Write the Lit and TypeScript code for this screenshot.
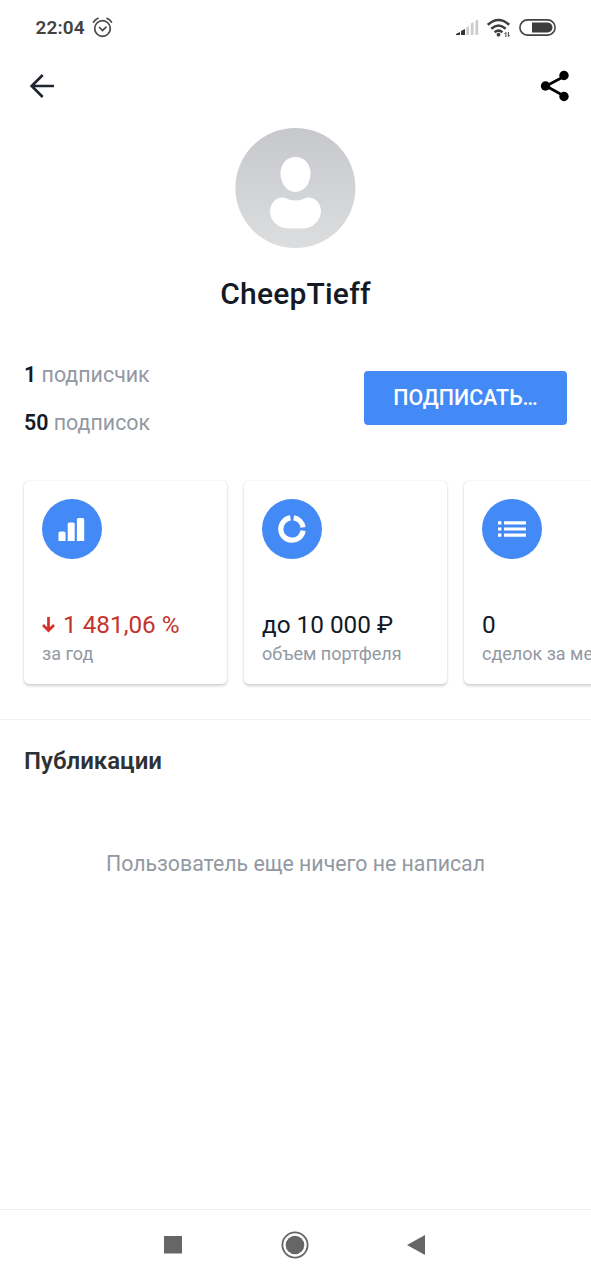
import { LitElement, html, css, svg } from "lit";
import { customElement } from "lit/decorators.js";

const barsIcon = svg`<path d="M16.500 42v-8a1.500 1.500 0 0 1 1.500-1.500h4a1.500 1.500 0 0 1 1.500 1.500v8zM25.700 42V25a1.500 1.500 0 0 1 1.500-1.500h4a1.500 1.500 0 0 1 1.500 1.500v17zM34.900 42V20.500a1.500 1.500 0 0 1 1.500-1.500h4.300a1.500 1.500 0 0 1 1.500 1.500V42z" fill="#fff"/>`;

const donutIcon = svg`<g fill="none" stroke="#fff" stroke-width="5.200">
  <path d="M28.400 18.920A11.200 11.200 0 1 0 41.080 31.600"/>
  <path d="M31.700 18.930A11.200 11.200 0 0 1 41.070 28.300"/></g>`;

const listIcon = svg`<path d="M16 22.300h3.400v3.200H16zM22 22.300h22v3.200H22zM16 28.400h3.400v3.200H16zM22 28.400h22v3.200H22zM16 34.500h3.400v3.200H16zM22 34.500h22v3.200H22z" fill="#fff"/>`;

@customElement("app-root")
export class AppRoot extends LitElement {
  static styles = css`
    :host { display: flex; flex-direction: column; width: 591px; height: 1280px; overflow: hidden;
      background: #fff; color: #131a26; font-family: Roboto, "Liberation Sans", sans-serif; }
    svg { display: block; flex: none; }
    .status { display: flex; align-items: center; height: 55px; padding: 0 35px 0 35.500px; box-sizing: border-box; color: #424242; }
    .time { font-size: 19px; font-weight: 600; line-height: 24px; letter-spacing: 0.100px; width: 56.500px; white-space: nowrap; }
    .spacer { flex: 1; }
    .signal { margin-right: 8px; }
    .wifi { margin-right: 8px; }
    .toolbar { display: flex; justify-content: space-between; align-items: center; height: 62px; padding: 0 21px 0 29px; }
    .avatar { margin: 11px 0 0 235px; }
    .name { margin: 28px 0 0; text-align: center; font-size: 30px; line-height: 36px; font-weight: 500; letter-spacing: 0.200px; }
    .follow { display: flex; justify-content: space-between; margin-top: 49px; padding: 0 24px; height: 84px; }
    .counts { display: flex; flex-direction: column; gap: 20px; font-size: 21.400px; line-height: 28px; color: #9299a2; white-space: nowrap; }
    .counts b { color: #131a26; font-weight: 600; }
    .button { box-sizing: border-box; margin-top: 9.500px; width: 203px; height: 54px; border: 0; border-radius: 4px; padding: 0;
      background: #448af6; color: #fff; font: 500 21.400px/54px Roboto, sans-serif; }
    .cards { display: flex; gap: 17px; margin-top: 35.500px; padding: 0 0 0 23.500px; height: 203px; }
    .card { box-sizing: border-box; flex: none; width: 203px; height: 203px; border-radius: 5px; padding: 18.500px; background: #fff;
      box-shadow: 0 1.500px 3px rgba(0,0,0,.18), 0 0 1px rgba(0,0,0,.12); white-space: nowrap; }
    .value { display: flex; align-items: center; margin-top: 51px; font-size: 24.300px; line-height: 30px; }
    .value.down { color: #c3342f; gap: 8px; }
    .label { margin-top: 1px; font-size: 18px; line-height: 26px; color: #9299a2; }
    .rule { height: 1px; margin-top: 35px; background: #f2f2f2; }
    .heading { margin: 26px 24px 0; font-size: 24px; line-height: 30px; font-weight: 600; color: #303133; }
    .empty { margin: 74px 0 0; text-align: center; font-size: 21.300px; line-height: 28px; color: #9299a2; }
    .nav { display: flex; justify-content: space-between; align-items: center; margin-top: auto; height: 70px; padding: 0 166px 0 163px;
      border-top: 1px solid #ececec; }
  `;

  private card(icon: unknown, value: string, label: string, down = false) {
    return html`<div class="card">
      <svg width="60" height="60"><circle cx="30" cy="30" r="30" fill="#448af6"/>${icon}</svg>
      <div class="value ${down ? "down" : ""}">
        ${down ? html`<svg width="13" height="16"><path d="M6.500 0v13M1 8l5.500 5.500L12 8" fill="none" stroke="#d62f2c" stroke-width="2.700"/></svg>` : ""}
        <span>${value}</span></div>
      <div class="label">${label}</div></div>`;
  }

  render() {
    return html`
      <div class="status">
        <span class="time">22:04</span>
        <svg width="21" height="21" fill="none" stroke="#484848" stroke-width="1.700" stroke-linecap="round">
          <circle cx="10.500" cy="11.500" r="7.800"/><path d="M7.500 10.500l3 3 3.500-3.300M1.500 5.200Q3 2.500 6 1.300M19.500 5.200Q18 2.500 15 1.300"/></svg>
        <span class="spacer"></span>
        <svg class="signal" width="23" height="17"><path d="M0 16v-1l4-2v3zM5 16v-4l4-2v6z" fill="#333"/><path d="M10.200 16V8.500L13 7v9zM14.800 16V4.500L17.600 3v13zM19.400 16V2l2.800-1.500V16z" fill="#ccc"/></svg>
        <svg class="wifi" width="24" height="20" fill="none" stroke="#3d3d3d" stroke-width="2.500">
          <path d="M.8 6.800Q11.500-2.800 22.200 6.800M4.300 10.800Q11.500 4.300 18.700 10.800M7.600 14.200Q11.500 11 15.400 14.200"/>
          <circle cx="11.500" cy="16.700" r="1.900" fill="#3d3d3d" stroke="none"/><path d="M18.900 19v-4.500l-1.300 1.300M21.400 14v4.500l1.300-1.300" stroke-width="1"/></svg>
        <svg width="37" height="17"><rect x=".9" y=".9" width="35.200" height="15.200" rx="7.600" fill="none" stroke="#444" stroke-width="1.600"/><path d="M13 3.500h15.500a5 5 0 0 1 0 10H13z" fill="#3d3d3d"/></svg>
      </div>
      <div class="toolbar">
        <svg width="26" height="26" fill="none" stroke="#1f2630" stroke-width="2.700"><path d="M25 13H3M13.700 2L2.700 13l11 11"/></svg>
        <svg width="30" height="32"><path d="M25 6L6 16l19 10.500" fill="none" stroke="#000" stroke-width="2.700"/><circle cx="24" cy="5.500" r="4.700"/><circle cx="5.500" cy="16" r="4.700"/><circle cx="24" cy="26.500" r="4.700"/></svg>
      </div>
      <svg class="avatar" width="121" height="120">
        <defs><linearGradient id="g" x2="0" y2="1"><stop stop-color="#c6c8cc"/><stop offset="1" stop-color="#dcddde"/></linearGradient></defs>
        <circle cx="60.400" cy="60" r="60" fill="url(#g)"/>
        <path d="M60.500 29C69 29 75.500 35.500 75.500 45.500S69 64 60.500 64 45.500 55.500 45.500 45.500 52 29 60.500 29zM49 69.500Q60.500 75.500 72 69.500C80 69 86 75 86 83.500 85 95 76 100.500 67 100.500H54C45 100.500 35.500 95 35 83.500 35 75 41 69 49 69.500z" fill="#fff"/>
      </svg>
      <h1 class="name">CheepTieff</h1>
      <div class="follow">
        <div class="counts"><div><b>1</b> подписчик</div><div><b>50</b> подписок</div></div>
        <button class="button">ПОДПИСАТЬ…</button>
      </div>
      <div class="cards">
        ${this.card(barsIcon, "1 481,06 %", "за год", true)}
        ${this.card(donutIcon, "до 10 000 ₽", "объем портфеля")}
        ${this.card(listIcon, "0", "сделок за месяц")}
      </div>
      <div class="rule"></div>
      <h2 class="heading">Публикации</h2>
      <p class="empty">Пользователь еще ничего не написал</p>
      <div class="nav">
        <svg width="19" height="18"><path d="M1 0h18v17.500H1z" fill="#666"/></svg>
        <svg width="28" height="28"><circle cx="14" cy="14" r="12.600" fill="none" stroke="#666" stroke-width="1.800"/><circle cx="14" cy="14" r="9.300" fill="#666"/></svg>
        <svg width="18" height="20"><path d="M18 0v20L0 10z" fill="#666"/></svg>
      </div>`;
  }
}
